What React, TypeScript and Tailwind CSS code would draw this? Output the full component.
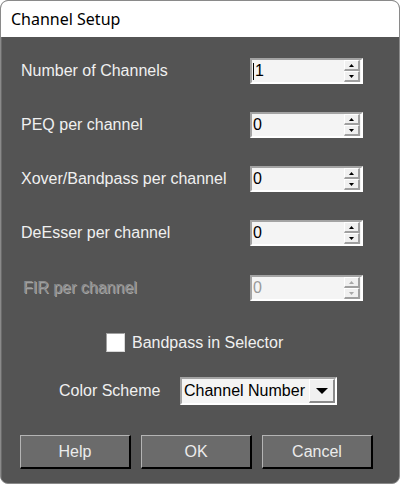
import React from "react";

const arial = { fontFamily: '"Liberation Sans", Arial, sans-serif' };

function Spin({ value, disabled, caret }: { value: string; disabled?: boolean; caret?: boolean }) {
  const arrow = disabled ? "#a8a8a8" : "#000";
  return (
    <div className="w-[113px] h-[26px] shrink-0 flex border-2 border-t-[#a3a3a3] border-l-[#a3a3a3] border-b-white border-r-white bg-[#f4f4f4]">
      <div
        className={`flex-1 flex items-center pl-[1px] text-[16px] leading-none ${disabled ? "text-[#9a9a9a]" : "text-black"}`}
        style={arial}
      >
        {caret && <span className="w-px h-[17px] bg-black mr-[1px]" />}
        {value}
      </div>
      <div className="w-[16px] flex flex-col mr-[1px]">
        <div className="flex-1 flex items-center justify-center bg-[#f0f0f0] border-t border-l border-t-white border-l-white border-b-2 border-r-2 border-b-[#a0a0a0] border-r-[#a0a0a0]">
          <svg width="5" height="3" viewBox="0 0 5 3"><path d="M2.5 0 L5 3 L0 3 Z" fill={arrow} /></svg>
        </div>
        <div className="flex-1 flex items-center justify-center bg-[#f0f0f0] border-t border-l border-t-white border-l-white border-b-2 border-r-2 border-b-[#a0a0a0] border-r-[#a0a0a0]">
          <svg width="5" height="3" viewBox="0 0 5 3"><path d="M0 0 L5 0 L2.5 3 Z" fill={arrow} /></svg>
        </div>
      </div>
    </div>
  );
}

function Row({ label, value, disabled, caret, mt }: { label: string; value: string; disabled?: boolean; caret?: boolean; mt: string }) {
  return (
    <div className={`flex items-center h-[26px] ${mt}`}>
      <div
        className={`w-[248px] shrink-0 text-[16px] leading-none ${disabled ? "text-[#8c8c8c] pl-[21px]" : "text-[#f0f0f0] pl-[19px]"}`}
        style={disabled ? { ...arial, textShadow: "1px 1px 0 #a9a9a9" } : arial}
      >
        {label}
      </div>
      <Spin value={value} disabled={disabled} caret={caret} />
    </div>
  );
}

function Btn({ label }: { label: string }) {
  return (
    <div
      className="w-[111px] h-[34px] flex items-center justify-center bg-[#6b6b6b] border border-t-[#b4b4b4] border-l-[#b4b4b4] border-b-2 border-r-2 border-b-black border-r-black text-[16px] text-[#ececec] leading-none"
      style={arial}
    >
      {label}
    </div>
  );
}

export default function App() {
  return (
    <div className="w-[400px] h-[484px] bg-white">
      <div className="w-[400px] h-[484px] rounded-[8px] border border-[#8a8a8a] overflow-hidden flex flex-col bg-[#545454]">
        <div
          className="h-[36px] bg-white flex items-center pl-[10px] text-[16px] text-black"
          style={{ fontFamily: '"Noto Sans", "Open Sans", sans-serif' }}
        >
          Channel Setup
        </div>
        <div className="flex-1 flex flex-col pt-[21px] border-l border-[#6a6a6a]">
          <Row label="Number of Channels" value="1" caret mt="" />
          <Row label="PEQ per channel" value="0" mt="mt-[28px]" />
          <Row label="Xover/Bandpass per channel" value="0" mt="mt-[28px]" />
          <Row label="DeEsser per channel" value="0" mt="mt-[28px]" />
          <Row label="FIR per channel" value="0" disabled mt="mt-[29px]" />

          <div className="flex items-center mt-[32px] pl-[104px] h-[19px]">
            <div className="w-[19px] h-[19px] bg-white border border-t-[#a0a0a0] border-l-[#a0a0a0] border-b-[#d8d8d8] border-r-[#d8d8d8]" />
            <span className="ml-[7px] text-[16px] text-[#f0f0f0] leading-none" style={arial}>
              Bandpass in Selector
            </span>
          </div>

          <div className="flex items-center mt-[25px] h-[28px]">
            <span className="w-[178px] shrink-0 pl-[57px] text-[16px] text-[#f0f0f0] leading-none" style={arial}>
              Color Scheme
            </span>
            <div className="w-[157px] h-[28px] flex items-center bg-[#f4f4f4] border-2 border-t-[#a3a3a3] border-l-[#a3a3a3] border-b-white border-r-white">
              <span className="flex-1 pl-[2px] text-[16px] text-black leading-none" style={arial}>
                Channel Number
              </span>
              <div className="w-[26px] h-[24px] flex items-center justify-center bg-[#f0f0f0] border border-t-white border-l-white border-b-2 border-r-2 border-b-[#8a8a8a] border-r-[#8a8a8a]">
                <svg width="12" height="6" viewBox="0 0 12 6"><path d="M0 0 L12 0 L6 6 Z" fill="#000" /></svg>
              </div>
            </div>
          </div>

          <div className="flex mt-[30px] pl-[18px] gap-[10px]">
            <Btn label="Help" />
            <Btn label="OK" />
            <Btn label="Cancel" />
          </div>
        </div>
      </div>
    </div>
  );
}
